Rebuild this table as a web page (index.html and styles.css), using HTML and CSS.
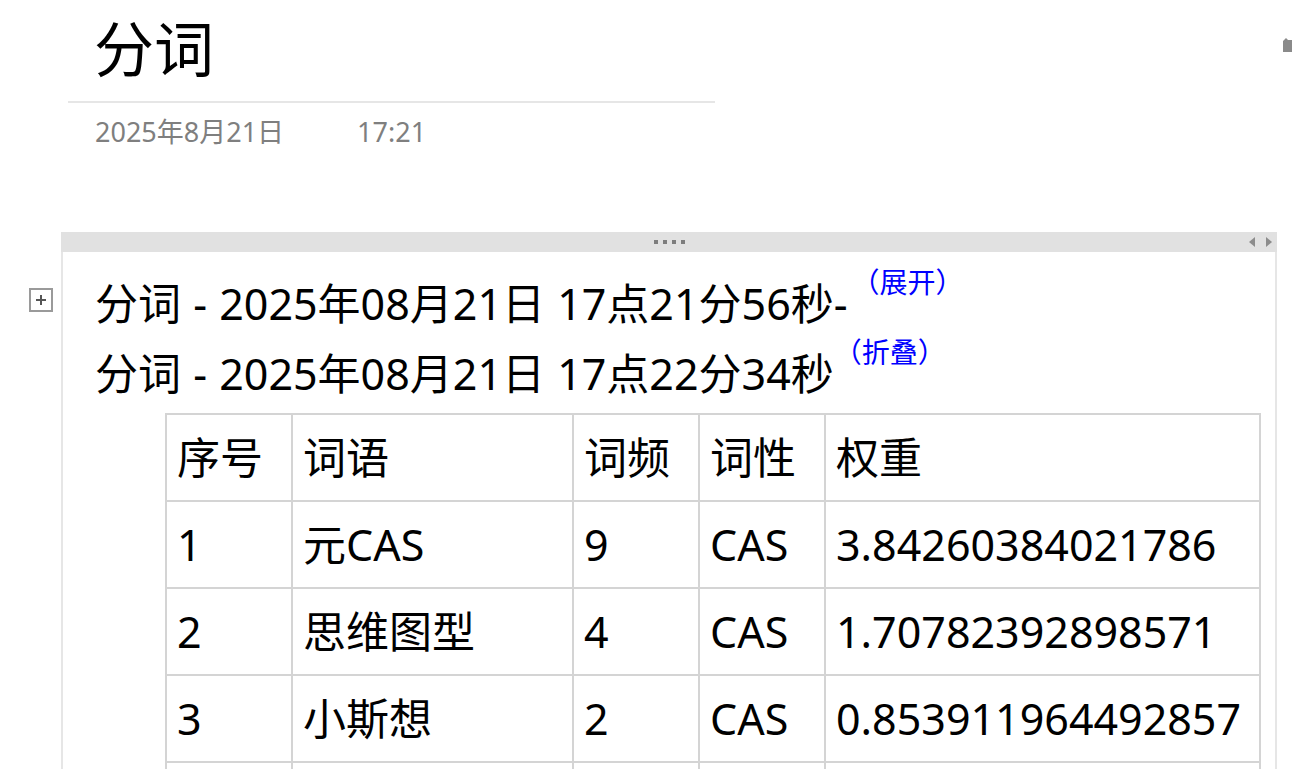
FILE: index.html
```html
<!DOCTYPE html>
<html lang="zh-CN">
<head>
<meta charset="utf-8">
<title>分词</title>
<link rel="stylesheet" href="styles.css">
</head>
<body>
<div class="page">
  <svg class="corner-icon" width="9" height="14" viewBox="0 0 9 14"><path d="M0 3 L3 0 L5 2 L9 2 L9 14 L0 14 Z" fill="#8a8a8a"/></svg>
  <header class="title-block">
    <h1 class="title">分词</h1>
    <div class="meta"><span>2025年8月21日</span><span>17:21</span></div>
  </header>

  <section class="outline">
    <div class="outline-bar">
      <div class="dots"><i></i><i></i><i></i><i></i></div>
      <div class="arrows">
        <svg width="7" height="10" viewBox="0 0 7 10"><path d="M6 0 L0 5 L6 10 Z" fill="#8c8c8c"/></svg>
        <svg width="7" height="10" viewBox="0 0 7 10"><path d="M1 0 L7 5 L1 10 Z" fill="#8c8c8c"/></svg>
      </div>
    </div>
    <div class="outline-body">
      <p class="para"><span class="expander"><svg width="12" height="12" viewBox="0 0 12 12"><path d="M6 1 V11 M1 6 H11" stroke="#555" stroke-width="2"/></svg></span>分词 - 2025年08月21日 17点21分56秒-<span class="sup">（展开）</span></p>
      <p class="para">分词 - 2025年08月21日 17点22分34秒<span class="sup sup2">（折叠）</span></p>
      <table class="words">
        <colgroup>
          <col class="c1"><col class="c2"><col class="c3"><col class="c4"><col class="c5">
        </colgroup>
        <tr><td>序号</td><td>词语</td><td>词频</td><td>词性</td><td>权重</td></tr>
        <tr><td>1</td><td>元CAS</td><td>9</td><td>CAS</td><td>3.84260384021786</td></tr>
        <tr><td>2</td><td>思维图型</td><td>4</td><td>CAS</td><td>1.70782392898571</td></tr>
        <tr><td>3</td><td>小斯想</td><td>2</td><td>CAS</td><td>0.853911964492857</td></tr>
        <tr><td></td><td></td><td></td><td></td><td></td></tr>
      </table>
    </div>
  </section>
</div>
</body>
</html>
```

FILE: styles.css
```css
html, body {
  margin: 0;
  padding: 0;
  background: #ffffff;
}

body {
  font-family: "Noto Sans", "Noto Sans CJK SC", sans-serif;
  color: #000;
  overflow: hidden;
}

.page {
  position: relative;
  width: 1292px;
  height: 769px;
  overflow: hidden;
}

.corner-icon {
  position: absolute;
  right: 0;
  top: 38px;
}

.title-block {
  margin-left: 68px;
  width: 647px;
}

.title {
  margin: 14px 0 0 0;
  padding: 0 0 17px 26px;
  font-size: 60px;
  line-height: 70px;
  font-weight: normal;
  border-bottom: 2px solid #e6e6e6;
}

.meta {
  margin-top: 11px;
  padding-left: 27px;
  display: flex;
  gap: 73px;
  font-size: 27px;
  line-height: 36px;
  color: #7f7f7f;
}

.outline {
  margin-top: 82px;
  margin-left: 61px;
  width: 1216px;
}

.outline-bar {
  height: 20px;
  background: #e1e1e1;
  display: flex;
  align-items: center;
  justify-content: center;
  position: relative;
}

.dots {
  display: flex;
  gap: 5px;
}

.dots i {
  width: 4px;
  height: 4px;
  background: #7d7d7d;
}

.arrows {
  position: absolute;
  right: 5px;
  top: 5px;
  display: flex;
  gap: 9px;
}

.arrows svg { display: block; }

.outline-body {
  border-left: 2px solid #e6e6e6;
  border-right: 2px solid #e6e6e6;
  padding: 15px 0 0 32px;
  height: 600px;
}

.para {
  position: relative;
  margin: 0;
  font-size: 43px;
  line-height: 70px;
  height: 70px;
  white-space: nowrap;
  word-spacing: 1px;
}

.expander {
  position: absolute;
  left: -66px;
  top: 21px;
  width: 20px;
  height: 20px;
  border: 2px solid #9a9a9a;
  display: flex;
  align-items: center;
  justify-content: center;
}

.expander svg { display: block; }

.sup {
  font-family: "Noto Sans CJK SC", sans-serif;
  font-feature-settings: "halt";
  font-size: 28px;
  line-height: 1;
  color: #0000ff;
  vertical-align: 27px;
  margin-left: 18px;
}

.sup2 {
  margin-left: 14px;
}

.words {
  margin: 6px 0 0 70px;
  border-collapse: collapse;
  table-layout: fixed;
  width: 1094px;
  font-size: 43px;
}

.c1 { width: 126px; }
.c2 { width: 281px; }
.c3 { width: 126px; }
.c4 { width: 126px; }
.c5 { width: 435px; }

.words td {
  border: 2px solid #d4d4d4;
  height: 85px;
  padding: 0 0 0 10px;
  line-height: 60px;
  vertical-align: middle;
  white-space: nowrap;
  overflow: hidden;
}
```
